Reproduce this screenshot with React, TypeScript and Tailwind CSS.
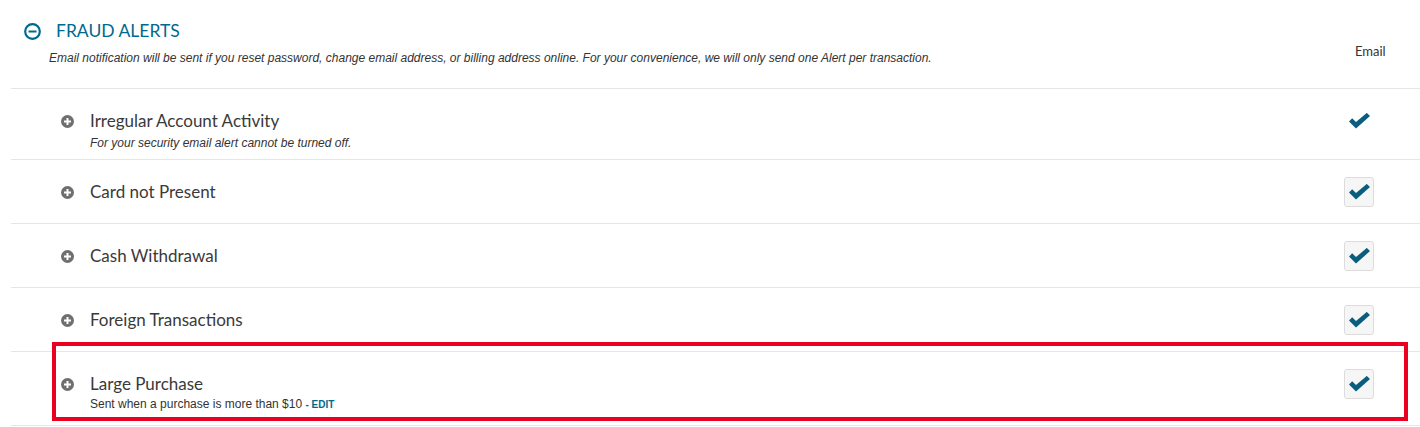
const rows = [
  { title: "Irregular Account Activity", sub: "For your security email alert cannot be turned off.", locked: true, h: "h-[71px]" },
  { title: "Card not Present", h: "h-[64px]" },
  { title: "Cash Withdrawal", h: "h-[64px]" },
  { title: "Foreign Transactions", h: "h-[64px]" },
  { title: "Large Purchase", large: true, h: "h-[74px]" },
];

const Check = () => (
  <svg width="23" height="17" viewBox="0 0 23 17">
    <path d="M1 8.5 L4.2 5.3 L8 9.1 L18.8 -0.1 L22 3.1 L8 15.6 Z" fill="#0b5d7e" />
  </svg>
);

const PlusCircle = () => (
  <svg width="13" height="13" viewBox="0 0 13 13">
    <circle cx="6.5" cy="6.5" r="6.5" fill="#6f6f6f" />
    <rect x="5.5" y="3" width="2" height="7" fill="#fff" />
    <rect x="3" y="5.5" width="7" height="2" fill="#fff" />
  </svg>
);

export default function App() {
  return (
    <div className="relative w-[1420px] h-[427px] bg-white overflow-hidden font-['Lato',sans-serif]">
      <div className="ml-[11px]">
        {/* header */}
        <div className="h-[89px] border-b border-[#e6e6e6] flex">
          <div className="flex-1">
            <div className="flex items-center pt-[21px] pl-[13px]">
              <svg width="17" height="17" viewBox="0 0 17 17">
                <circle cx="8.5" cy="8.5" r="7.3" fill="none" stroke="#00698e" strokeWidth="2.2" />
                <rect x="4.5" y="7.5" width="8" height="2" fill="#00698e" />
              </svg>
              <span className="ml-[15px] text-[17.5px] leading-[20px] text-[#00698e]">FRAUD ALERTS</span>
            </div>
            <p className="pl-[38px] mt-[9px] text-[12px] leading-[16px] italic text-[#333] font-['Liberation_Sans',sans-serif]">
              Email notification will be sent if you reset password, change email address, or billing address online. For your convenience, we will only send one Alert per transaction.
            </p>
          </div>
          <div className="w-[76px] pt-[42px] pl-[11px] text-[13px] leading-[18px] text-[#333]">Email</div>
        </div>

        {rows.map((r) => (
          <div key={r.title} className={`${r.h} border-b border-[#e6e6e6] flex items-start`}>
            <div className="pl-[50px] pt-[26px]">
              <PlusCircle />
            </div>
            <div className="flex-1 pl-[16px] pt-[20px]">
              <div className="text-[17px] leading-[24px] text-[#3a3a3a]">{r.title}</div>
              {r.sub && (
                <div className="mt-[3px] text-[12px] leading-[14px] italic text-[#333] font-['Liberation_Sans',sans-serif]">{r.sub}</div>
              )}
              {r.large && (
                <div className="mt-[1px] text-[12px] leading-[14px] text-[#333] font-['Liberation_Sans',sans-serif]">
                  Sent when a purchase is more than $10{" "}
                  <span className="text-[#00698e] text-[10px] font-bold">- EDIT</span>
                </div>
              )}
            </div>
            <div className="w-[76px] pt-[17px]">
              {r.locked ? (
                <div className="w-[30px] h-[30px] flex items-center justify-center">
                  <Check />
                </div>
              ) : (
                <div className="w-[30px] h-[30px] rounded-[3px] border border-[#dcdcdc] bg-[#f6f6f6] flex items-center justify-center">
                  <Check />
                </div>
              )}
            </div>
          </div>
        ))}
      </div>

      {/* highlight overlay */}
      <div className="absolute left-[52px] top-[342px] w-[1356px] h-[79px] border-[4px] border-[#ea0020]" />
    </div>
  );
}
